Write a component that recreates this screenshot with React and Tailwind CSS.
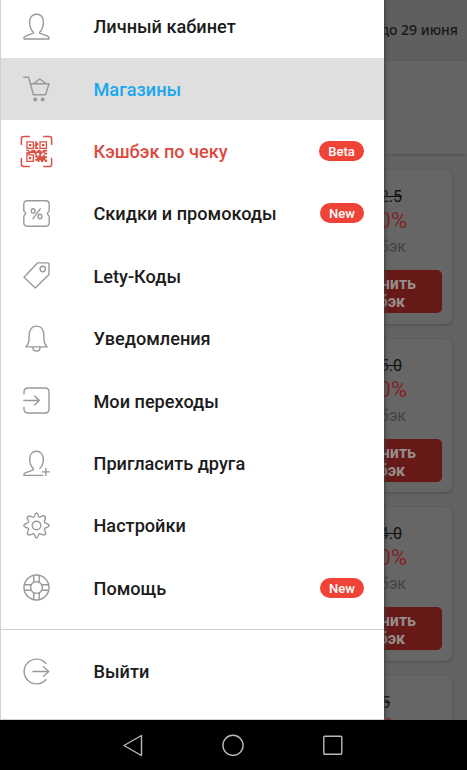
import clsx from "clsx";

const ProfileIcon = () => (
  <path d="M10.4 19.2C7.8 16.8 6.6 13.2 6.6 9.2C6.6 4.2 9.4 1.3 13.5 1.3S20.4 4.2 20.4 9.2C20.4 13.2 19.2 16.8 16.6 19.2V20.1L24.6 23.2Q26 23.8 26 25V26H1V25Q1 23.8 2.4 23.2L10.4 20.1Z" />
);

const CartIcon = () => (
  <>
    <path d="M.8 2.2H5.6L10.4 19.8H22.6L26 8.8H7.6M10.5 8.6L16.8 4L23 8.6" />
    <circle cx="12.2" cy="24.4" r="1.3" fill="currentColor" />
    <circle cx="19.6" cy="24.4" r="1.3" fill="currentColor" />
  </>
);

const QrIcon = () => (
  <>
    <path
      strokeWidth="1.5"
      d="M-1.6 6.5V.8Q-1.6-1.6 .8-1.6H6.3M20.7-1.6H26.2Q28.6-1.6 28.6 .8V6.5M28.6 20.5V26.2Q28.6 28.6 26.2 28.6H20.7M6.3 28.6H.8Q-1.6 28.6-1.6 26.2V20.5"
    />
    <path
      strokeWidth="1.3"
      strokeLinejoin="miter"
      d="M3.9 3.9H10.3V10.3H3.9ZM17 3.9H23.4V10.3H17ZM3.9 16.9H10.3V23.3H3.9Z"
    />
    <path
      fill="currentColor"
      stroke="none"
      d="M5.9 5.9h2.4v2.4H5.9zM19 5.9h2.4v2.4H19zM5.9 18.9h2.4v2.4H5.9zM12.2 3.2h1.5v1.5h1.5v3h-1.5v1.5h1.5v2h-3V8.5h-.8V6.7h.8zM3.2 11.8h3v1.5h2v-1.5h4v1.5h2.5v-1.5h3v1.5h2v-1.5h4.5v1.7h-2v1.3h2v1.7h-3v-1.7h-2v1.7h-3v-1.4h-2.5v1.4h-2.2v-1.6H7.2v1.2H3.2v-1.8h2v-1.2h-2zM12.2 16.8h2v1.5h1.6v-1.5h2.2v1.5h2v-1.5h1.8v1.5h2.3V20h-1.7v1.5h1.7V24h-2.2v-1.4h-1.6V24H18v-1.5h-1.6V24h-1.8v-1.3h-2.4V21h1.6v-1.4h-1.6z"
    />
  </>
);

const CouponIcon = () => (
  <>
    <path d="M4.2 .8H22.8Q26.2 .8 26.2 4.2V10.6C26.2 12 24.4 12 24.4 13.5S26.2 15 26.2 16.4V22.8Q26.2 26.2 22.8 26.2H4.2Q.8 26.2 .8 22.8V16.4C.8 15 2.6 15 2.6 13.5S.8 12 .8 10.6V4.2Q.8 .8 4.2 .8Z" />
    <ellipse cx="10.2" cy="10.9" rx="1.9" ry="2.2" />
    <ellipse cx="17" cy="16.5" rx="1.9" ry="2.2" />
    <path d="M17.2 8.8L10 18.6" />
  </>
);

const TagIcon = () => (
  <>
    <path d="M14.5 .9H24.8Q26 .9 26 2.1V12.5L12.3 26L1 15.2Z" />
    <circle cx="19.8" cy="7" r="2.7" />
  </>
);

const BellIcon = () => (
  <path d="M2.9 21.9C5.8 18.7 6.1 16.8 6.1 11.2C6.1 5 8.7 1.1 13.5 1.1S20.9 5 20.9 11.2C20.9 16.8 21.2 18.7 24.1 21.9ZM9.9 22.2C9.9 24.5 11.5 26 13.5 26S17.1 24.5 17.1 22.2" />
);

const EnterIcon = () => (
  <path d="M1 6.8V5Q1 1 5 1H22Q26 1 26 5V22Q26 26 22 26H5Q1 26 1 22V20.3M1 13.5H16.3M11.6 8.9L16.3 13.5L11.6 18.1" />
);

const InviteIcon = () => (
  <path d="M16.9 18.3C19.5 16 20.3 12.8 20.3 9C20.3 4.2 17.5 1.3 13.5 1.3S6.7 4.2 6.7 9C6.7 13 7.8 16.4 10.4 18.7V19.8L2.4 22.8Q1 23.4 1 24.6V25.4H19.8M19.3 21.9H26.3M22.8 18.4V25.4" />
);

const GearIcon = () => (
  <>
    <path d="M10.8 5.2C12 4.7 11.6 1 13.5 1S15 4.7 16.2 5.2C17.4 5.7 19.5 2.7 21.4 3.9C24.3 5.8 20.8 8.4 21.4 10.1C21.9 11.6 26.2 11.5 26.2 13.5S21.9 15.4 21.4 16.9C20.8 18.6 24.3 21.2 21.9 22.6C19.8 24 18 21.1 16.2 21.8C15 22.3 15.4 26 13.5 26S12 22.3 10.8 21.8C9 21.1 7.2 24 5.1 22.6C2.7 21.2 6.2 18.6 5.6 16.9C5.1 15.4 .8 15.5 .8 13.5S5.1 11.6 5.6 10.1C6.2 8.4 2.7 5.8 5.1 4.4C7.2 3 9 5.9 10.8 5.2Z" />
    <circle cx="13.5" cy="13.5" r="4.3" />
  </>
);

const HelpIcon = () => (
  <>
    <circle cx="13.5" cy="13.5" r="12.5" />
    <circle cx="13.5" cy="13.5" r="5.9" />
    <path d="M10.8 1.5V8.3M16.2 1.5V8.3M10.8 18.7V25.5M16.2 18.7V25.5M1.5 10.8H8.3M1.5 16.2H8.3M18.7 10.8H25.5M18.7 16.2H25.5" />
  </>
);

const ExitIcon = () => (
  <path d="M23 5.5A12.4 12.4 0 1 0 23 21.5M10 13.5H25.8M20.4 8.8L25.8 13.5L20.4 18.2" />
);

const menuItems = [
  { icon: ProfileIcon, label: "Личный кабинет" },
  { icon: CartIcon, label: "Магазины", active: true },
  { icon: QrIcon, label: "Кэшбэк по чеку", badge: "Beta", accent: true },
  { icon: CouponIcon, label: "Скидки и промокоды", badge: "New" },
  { icon: TagIcon, label: "Lety-Коды" },
  { icon: BellIcon, label: "Уведомления" },
  { icon: EnterIcon, label: "Мои переходы" },
  { icon: InviteIcon, label: "Пригласить друга" },
  { icon: GearIcon, label: "Настройки" },
  { icon: HelpIcon, label: "Помощь", badge: "New" },
];

const offers = ["2.5", "5.0", "4.0"];

const MenuItem = ({ icon: Icon, label, badge, active, accent }) => (
  <div
    className={clsx(
      "flex h-[62.4px] shrink-0 items-center pl-[22px] pr-5",
      active && "bg-[#dfdfdf]"
    )}
  >
    <svg
      viewBox="0 0 27 27"
      className={clsx(
        "h-[27px] w-[27px] shrink-0 overflow-visible",
        accent ? "text-[#dc5147]" : "text-[#999]"
      )}
      fill="none"
      stroke="currentColor"
      strokeWidth="1.4"
      strokeLinecap="round"
      strokeLinejoin="round"
    >
      <Icon />
    </svg>
    <span
      className={clsx(
        "ml-[43.5px] grow pt-px text-[18.15px] font-medium whitespace-nowrap",
        active ? "text-[#19a7ee]" : accent ? "text-[#db4a40]" : "text-[#1c1c1c]"
      )}
    >
      {label}
    </span>
    {badge && (
      <span
        className={clsx(
          "flex h-5 items-center justify-center rounded-full bg-[#f04338] pt-px text-[13px] font-medium text-white",
          badge === "Beta" ? "w-[45px]" : "w-11"
        )}
      >
        {badge}
      </span>
    )}
  </div>
);

const OfferCard = ({ rate }) => (
  <div className="mr-[15px] flex h-[153.5px] shrink-0 flex-col items-end rounded-r-md bg-[#666] pt-[17px] shadow-[0_1px_3px_#4c4c4c]">
    <div className="mr-[50px] text-[16px] leading-5 text-[#111] line-through">{rate}</div>
    <div className="mr-[45px] mt-0.5 text-[22px] leading-6 text-[#84221f]">0%</div>
    <div className="mr-[46px] mt-1 text-[16px] leading-5 text-[#434343]">бэк</div>
    <div className="mt-[13px] mr-2.5 flex h-[43px] flex-col items-end self-stretch rounded-r-[5px] bg-[#661917] pt-[5px] text-[16px] leading-[18px] font-bold text-[#968e8c]">
      <span className="mr-[26px]">чить</span>
      <span className="mr-[37px]">бэк</span>
    </div>
  </div>
);

const App = () => {
  return (
    <div className="flex h-[770px] w-[467px] flex-col overflow-hidden bg-black font-['Roboto',sans-serif]">
      <div className="flex h-[720px] shrink-0 overflow-hidden">
        {/* Drawer */}
        <div className="z-10 flex w-[384px] shrink-0 flex-col border-b border-l border-[#d2d2d2] bg-white shadow-[1px_0_4px_#3c3c3c]">
          <div className="-mt-[4.9px] flex flex-col">
            {menuItems.map((item) => (
              <MenuItem key={item.label} {...item} />
            ))}
          </div>
          <div className="mt-[10px] border-t border-[#cfcfcf] pt-[10px]">
            <MenuItem icon={ExitIcon} label="Выйти" />
          </div>
        </div>

        {/* Dimmed page */}
        <div className="flex min-w-0 grow flex-col overflow-hidden bg-[#636363]">
          <div className="flex h-[61px] shrink-0 items-center justify-end bg-[#5f5f5f] pr-[9px] pb-[3px] font-['Noto_Sans',sans-serif] text-[14px] font-medium whitespace-nowrap text-[#171717]">
            до 29 июня
          </div>
          <div className="h-[93px] shrink-0 bg-[#656565] shadow-[0_1px_2px_#505050]" />
          <div className="mt-4 flex flex-col gap-[15px]">
            {offers.map((rate) => (
              <OfferCard key={rate} rate={rate} />
            ))}
            <div className="mr-[15px] flex h-[153.5px] shrink-0 flex-col items-end rounded-r-md bg-[#666] pt-[17px] shadow-[0_1px_3px_#4c4c4c]">
              <div className="mr-[62px] text-[16px] leading-5 text-[#111] line-through">5</div>
              <div className="mr-[52px] mt-0.5 text-[22px] leading-6 text-[#84221f]">0%</div>
            </div>
          </div>
        </div>
      </div>

      {/* Navigation bar */}
      <div className="flex h-[50px] items-center justify-center gap-[78px] pr-px">
        <svg viewBox="0 0 22 22" className="h-[22px] w-[22px]" fill="none" stroke="#bababa" strokeWidth="1.4" strokeLinejoin="round">
          <path d="M2 11.5L19.5 1.5V21.5Z" />
        </svg>
        <svg viewBox="0 0 22 22" className="h-[22px] w-[22px]" fill="none" stroke="#bababa" strokeWidth="1.4">
          <circle cx="11" cy="11.3" r="10.1" />
        </svg>
        <svg viewBox="0 0 22 22" className="h-[22px] w-[22px]" fill="none" stroke="#bababa" strokeWidth="1.4">
          <rect x="1.8" y="2.3" width="18" height="18" rx="1" />
        </svg>
      </div>
    </div>
  );
};

export default App;
